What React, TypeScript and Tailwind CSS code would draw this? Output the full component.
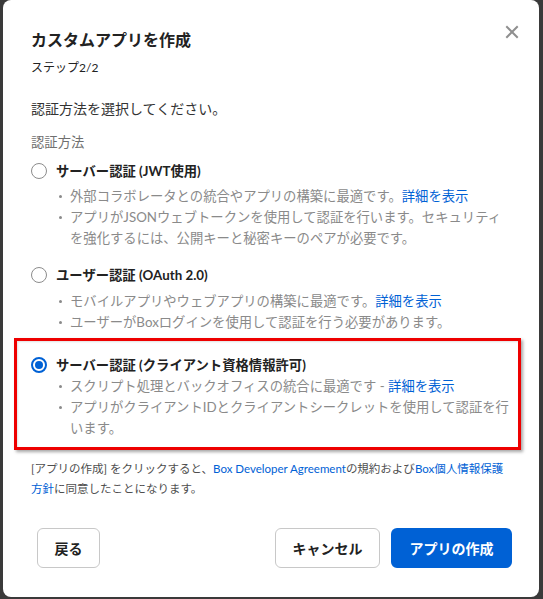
import React from "react";

const F = "font-['Lato','Noto_Sans_CJK_JP',sans-serif]";

function Bullet({ children }: { children: React.ReactNode }) {
  return (
    <li className="flex items-start">
      <span className="flex h-[21px] w-[11px] shrink-0 items-center">
        <span className="block h-[3px] w-[3px] rounded-full bg-[#8a8a8a]" />
      </span>
      <span className="min-w-0 flex-1">{children}</span>
    </li>
  );
}

function Radio({ checked }: { checked?: boolean }) {
  return checked ? (
    <span className="flex h-[16px] w-[16px] shrink-0 items-center justify-center rounded-full border-2 border-[#0061d5] bg-white">
      <span className="block h-[8px] w-[8px] rounded-full bg-[#0061d5]" />
    </span>
  ) : (
    <span className="block h-[16px] w-[16px] shrink-0 rounded-full border border-[#8c8c8c] bg-white" />
  );
}

function Link({ children }: { children: React.ReactNode }) {
  return <span className="text-[#0061d5]">{children}</span>;
}

export default function App() {
  return (
    <div className={`h-[599px] w-[543px] overflow-hidden bg-[#3a3a3a] pl-[3px] ${F}`}>
      <div className="relative flex h-[597px] w-[536px] flex-col rounded-[8px] bg-white pl-[28px] pr-[32px] pt-[28px]">
        <button className="absolute right-[20px] top-[25px] text-[#8f8f8f]" aria-label="close">
          <svg width="14" height="14" viewBox="0 0 14 14">
            <path d="M2 2 L12 12 M12 2 L2 12" stroke="currentColor" strokeWidth="2" strokeLinecap="square" />
          </svg>
        </button>

        <h1 className="text-[16px] font-bold leading-[24px] text-[#222]">カスタムアプリを作成</h1>
        <p className="mt-[7px] text-[12px] leading-[18px] text-[#222]">ステップ2/2</p>
        <p className="mt-[22px] text-[14px] leading-[20px] text-[#333]">認証方法を選択してください。</p>
        <p className="mt-[13px] text-[13.33px] leading-[20px] text-[#6f6f6f]">認証方法</p>

        {/* Option 1 */}
        <div className="mt-[9px] flex h-[20px] items-center gap-[9px]">
          <Radio />
          <span className="text-[13.33px] font-bold leading-[20px] text-[#222]">サーバー認証 (JWT使用)</span>
        </div>
        <ul className="ml-[28px] mt-[5px] text-[13.33px] leading-[21px] text-[#8a8a8a]">
          <Bullet>
            外部コラボレータとの統合やアプリの構築に最適です。<Link>詳細を表示</Link>
          </Bullet>
          <Bullet>アプリがJSONウェブトークンを使用して認証を行います。セキュリティを強化するには、公開キーと秘密キーのペアが必要です。</Bullet>
        </ul>

        {/* Option 2 */}
        <div className="mt-[16px] flex h-[20px] items-center gap-[9px]">
          <Radio />
          <span className="text-[13.33px] font-bold leading-[20px] text-[#222]">ユーザー認証 (OAuth 2.0)</span>
        </div>
        <ul className="ml-[28px] mt-[6px] text-[13.33px] leading-[21px] text-[#8a8a8a]">
          <Bullet>
            モバイルアプリやウェブアプリの構築に最適です。<Link>詳細を表示</Link>
          </Bullet>
          <Bullet>ユーザーがBoxログインを使用して認証を行う必要があります。</Bullet>
        </ul>

        {/* Option 3 (highlighted) */}
        <div className="-ml-[17px] -mr-[14px] mt-[5px] border-[3px] border-[#ee0000] pb-[8px] pl-[14px] pr-[6px] pt-[14px] shadow-[2px_2px_3px_rgba(0,0,0,0.35),inset_1px_1px_2px_rgba(0,0,0,0.12)]">
          <div className="flex h-[20px] items-center gap-[9px]">
            <Radio checked />
            <span className="text-[13.33px] font-bold leading-[20px] text-[#222]">サーバー認証 (クライアント資格情報許可)</span>
          </div>
          <ul className="ml-[28px] mt-[1px] text-[13.33px] leading-[21px] text-[#8a8a8a]">
            <Bullet>
              スクリプト処理とバックオフィスの統合に最適です - <Link>詳細を表示</Link>
            </Bullet>
            <Bullet>アプリがクライアントIDとクライアントシークレットを使用して認証を行います。</Bullet>
          </ul>
        </div>

        <p className="mt-[9px] text-[11.5px] leading-[20px] text-[#4e4e4e]">
          [アプリの作成] をクリックすると、<Link>Box Developer Agreement</Link>の規約および<Link>Box個人情報保護</Link>
          <Link>方針</Link>に同意したことになります。
        </p>

        <div className="-mr-[5px] ml-[6px] mt-[29px] flex items-center">
          <button className="h-[40px] w-[63px] rounded-[6px] border border-[#c8c8c8] bg-white text-[14px] font-bold text-[#222]">
            戻る
          </button>
          <div className="ml-auto flex gap-[11px]">
            <button className="h-[40px] w-[105px] rounded-[6px] border border-[#c8c8c8] bg-white text-[14px] font-bold text-[#222]">
              キャンセル
            </button>
            <button className="h-[40px] w-[121px] rounded-[6px] bg-[#0061d5] text-[14px] font-bold text-white">
              アプリの作成
            </button>
          </div>
        </div>
      </div>
    </div>
  );
}
